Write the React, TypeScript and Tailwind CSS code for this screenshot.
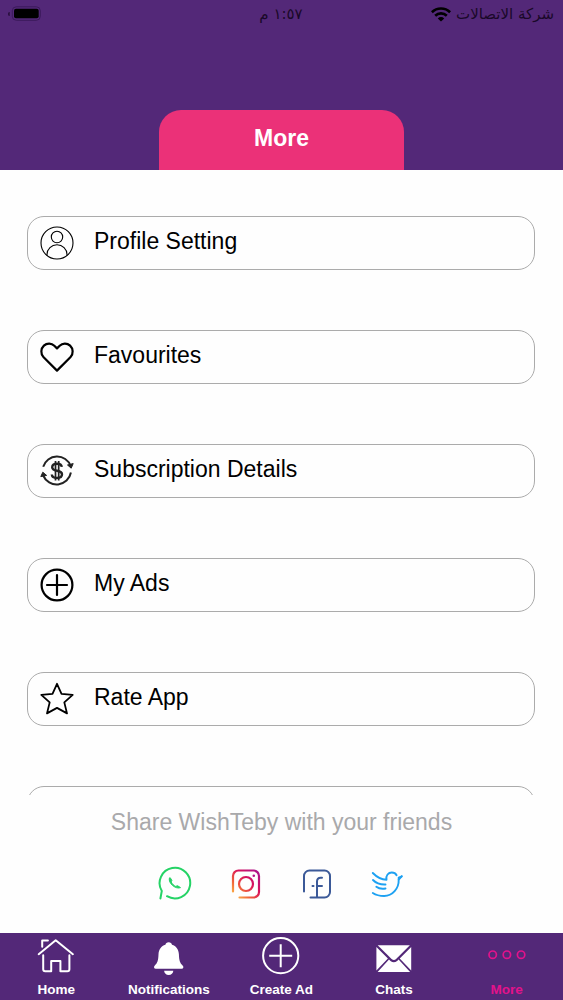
import type { ReactNode } from "react";

type MenuItemProps = {
	label?: string;
	icon?: ReactNode;
};

type NavItemProps = {
	label: string;
	icon: ReactNode;
	active?: boolean;
};

const menuItems: MenuItemProps[] = [
	{
		label: "Profile Setting",
		icon: (
			<g strokeWidth="1.1">
				<circle cx="17" cy="17" r="16" />
				<circle cx="17" cy="11" r="5.7" />
				<path d="M7 29.4v-1a10 9.7 0 0 1 20 0v1" />
			</g>
		),
	},
	{
		label: "Favourites",
		icon: (
			<path
				d="M17 30.600 3.400 17C.5 14 .7 8.600 3.900 5.600c3.100-2.900 7.700-2.600 10.400.1L17 8.400l2.700-2.700c2.700-2.700 7.300-3 10.400-.1 3.200 3 3.400 8.400.5 11.400z"
				strokeWidth="2.200"
			/>
		),
	},
	{
		label: "Subscription Details",
		icon: (
			<g stroke="#222">
				<path d="M3.200 12.800a14.500 14.500 0 0 1 27.500-.8M30.900 18.500a14.500 14.500 0 0 1-27.700 3" strokeWidth="2" />
				<path d="m27.500 11 3.700 3.200 2-4.600zM.8 22.600l2-4.400 3.800 3.200z" fill="#222" strokeWidth="1" />
				<path
					d="M21.800 12.900c-.3-2.200-2-3.200-4.800-3.200s-4.800 1.200-4.800 3.500c0 5 9.800 2.200 9.800 7.100 0 2.400-2 3.700-5 3.700s-5-1.200-5.200-3.500"
					strokeWidth="2.400"
				/>
				<path d="M15.500 7v19.600M18.700 7v19.600" strokeWidth="1.700" />
			</g>
		),
	},
	{
		label: "My Ads",
		icon: (
			<g strokeWidth="2.200" strokeLinecap="round">
				<circle cx="17" cy="17" r="15.400" />
				<path d="M17 7v20M7 17h20" />
			</g>
		),
	},
	{
		label: "Rate App",
		icon: (
			<path
				d="m17 1.800 4.500 10 11.200 1-8.400 7.600 2.700 11L17 25.900 7 31.400l2.700-11-8.400-7.600 11.200-1z"
				strokeWidth="1.800"
			/>
		),
	},
	// next row, only its top edge shows above the share section
	{},
];

const navItems: NavItemProps[] = [
	{
		label: "Home",
		icon: (
			<g fill="none" stroke="currentColor" strokeWidth="2" strokeLinecap="round" strokeLinejoin="round">
				<path d="M3 18.500 20 4.500l17.200 14M6.500 11V4.700h5.700" />
				<path d="M7.500 19.500v14q0 2 2 2h6V25.200h9.200v10.300h7q2 0 2-2v-14" />
			</g>
		),
	},
	{
		label: "Notifications",
		icon: (
			<g fill="currentColor">
				<path d="M20 6.500c1.900 0 3 1 3.300 2.500 4.200 1.300 6.700 4.800 6.900 9.500.2 6.400 1.200 8.900 3.700 11.200 1.400 1.300.8 3.300-1 3.300H7.100c-1.800 0-2.400-2-1-3.300 2.500-2.300 3.500-4.800 3.700-11.200.2-4.700 2.700-8.200 6.900-9.500.3-1.500 1.400-2.500 3.300-2.500z" />
				<path d="M15.400 35h9.200c-.2 2.700-2 4.200-4.600 4.200s-4.400-1.500-4.600-4.200z" />
			</g>
		),
	},
	{
		label: "Create Ad",
		icon: (
			<g fill="none" stroke="currentColor" strokeWidth="2">
				<circle cx="20" cy="20" r="17.600" />
				<path d="M20 8.500v23M8.500 20h23" />
			</g>
		),
	},
	{
		label: "Chats",
		icon: (
			<g fill="currentColor">
				<path d="M4 9.500h32.200L22.400 23.200q-2.200 2-4.500 0z" />
				<path d="m2.700 11.300 11.500 11.400L2.700 34.800zM37.500 11.300v23.500L26 22.700z" />
				<path d="m15.300 23.800 1.500 1.400q3.300 2.700 6.600 0l1.500-1.400 11.500 12.400H3.900z" />
			</g>
		),
	},
	{
		label: "More",
		active: true,
		icon: (
			<g fill="none" stroke="currentColor" strokeWidth="1.700">
				<circle cx="6" cy="19" r="3.700" />
				<circle cx="20.200" cy="19" r="3.700" />
				<circle cx="34.400" cy="19" r="3.700" />
			</g>
		),
	},
];

function StatusBar() {
	return (
		<div dir="rtl" className="grid h-7 grid-cols-3 items-center pl-2 pr-[9px] text-[#1a0829]">
			<div className="flex items-center gap-[5px]">
				<span className="whitespace-nowrap font-['DejaVu_Sans',sans-serif] text-[15px] leading-7">شركة الاتصالات</span>
				<svg className="h-[15px] w-5 shrink-0 text-black" viewBox="0 0 20 15" fill="none" stroke="currentColor">
					<path d="M.9 5.200a13 13 0 0 1 18.200 0M4.200 8.700a8.300 8.300 0 0 1 11.600 0" strokeWidth="2.600" />
					<path d="M6.800 11.400a4.600 4.600 0 0 1 6.400 0L10 14.600z" fill="currentColor" stroke="none" />
				</svg>
			</div>
			<span className="text-center font-['DejaVu_Sans',sans-serif] text-[15px] leading-7">١:٥٧ م</span>
			<svg dir="ltr" className="h-4 w-[33px] justify-self-end" viewBox="0 0 33 16">
				<path d="M1.800 6v4a2 2 0 0 1 0-4z" fill="#2c1142" />
				<rect x="4.300" y=".8" width="28" height="13.500" rx="4" fill="none" stroke="#3b195b" />
				<rect x="6" y="2.800" width="24.700" height="9.500" rx="2" fill="#000" />
			</svg>
		</div>
	);
}

function Header() {
	return (
		<header className="flex h-[170px] shrink-0 flex-col justify-between bg-[#532878]">
			<StatusBar />
			<h1 className="mx-auto h-[60px] w-[245px] rounded-t-[22px] bg-[#eb3178] text-center text-[23px] font-bold leading-[56px] text-white">
				More
			</h1>
		</header>
	);
}

function MenuItem({ label, icon }: MenuItemProps) {
	return (
		<button className="flex h-[54px] w-full shrink-0 items-center gap-5 rounded-[17px] border border-[#ababab] pl-3 text-left">
			<svg className="size-[34px] shrink-0" viewBox="0 0 34 34" fill="none" stroke="#000" strokeLinejoin="round">
				{icon}
			</svg>
			{label && <span className="pb-1 text-[23px] leading-7 text-black">{label}</span>}
		</button>
	);
}

function ShareSection() {
	return (
		<section className="flex flex-1 flex-col items-center pt-[13px]">
			<p className="text-[23px] leading-7 text-[#a9a9ab]">Share WishTeby with your friends</p>
			<div className="mt-[30px] flex gap-[34.500px]">
				{/* whatsapp */}
				<svg className="size-9" viewBox="0 0 36 36" fill="none" stroke="#25d366" strokeWidth="2" strokeLinecap="round">
					<path d="M2.400 32.500 3.800 25A15.300 15.300 0 1 1 9 30.200" />
					<path
						d="M11.300 12.300c-.6 2.300.9 5.100 3.300 7.200 2.500 2.200 5.800 3.100 7.900 2.100l-3-1.900-1.800.7c-2.100-1-3.700-2.600-4.500-4.500l.7-1.500-1.500-2.400z"
						fill="#25d366"
						strokeWidth="1"
						strokeLinejoin="round"
					/>
				</svg>
				{/* instagram */}
				<svg className="size-9" viewBox="0 0 36 36" fill="none" stroke="url(#insta)" strokeWidth="2.200" strokeLinecap="round">
					<defs>
						<linearGradient id="insta" gradientUnits="userSpaceOnUse" x1="5" y1="31" x2="31" y2="5">
							<stop offset="0" stopColor="#ffc247" />
							<stop offset="0.300" stopColor="#f0623a" />
							<stop offset="0.600" stopColor="#d9125a" />
							<stop offset="1" stopColor="#a8128f" />
						</linearGradient>
					</defs>
					<path d="M5 25.500V10a5.500 5.500 0 0 1 5.500-5.500h15A5.500 5.500 0 0 1 31 10v16a5.500 5.500 0 0 1-5.500 5.500H11.500" />
					<circle cx="18" cy="18" r="7" />
					<circle cx="25.800" cy="9.700" r="1.300" fill="#b5128a" stroke="none" />
				</svg>
				{/* facebook */}
				<svg className="size-9" viewBox="0 0 36 36" fill="none" stroke="#3b5998" strokeWidth="2" strokeLinecap="round">
					<path d="M5 25.500V10a5.500 5.500 0 0 1 5.500-5.500h15A5.500 5.500 0 0 1 31 10v16a5.500 5.500 0 0 1-5.500 5.500H11.500" />
					<path d="M18 31V15.500q0-3.700 3.700-3.700h1.300M18 20h5M13.500 20h1" />
				</svg>
				{/* twitter */}
				<svg
					className="size-9"
					viewBox="0 0 36 36"
					fill="none"
					stroke="#1da1f2"
					strokeWidth="1.900"
					strokeLinecap="round"
					strokeLinejoin="round"
				>
					<path d="M3.800 7c3.500 3.600 8.200 6.600 13.700 6.700-.9-4.300 1.900-7.200 5.300-7.200 2.300 0 4 1.200 4.800 2.700M32.700 10.300l-3 3.300c.3 9-6.300 16.400-14.600 16.400-4.300 0-8.200-1-11.300-3" />
					<path d="M29.700 13.600v-2l3-1.300M4 14c3 3.200 7.300 4.700 12.500 4.500M7.300 20.800c2.700 2 5.800 2.400 9.200 1.700" />
				</svg>
			</div>
		</section>
	);
}

function NavItem({ label, icon, active }: NavItemProps) {
	return (
		<button className={`flex flex-col items-center pt-[3px] ${active ? "text-[#e3128b]" : "text-white"}`}>
			<svg className="size-10" viewBox="0.3 0.3 40 40">
				{icon}
			</svg>
			<span className="mt-[5px] whitespace-nowrap text-[13.500px] font-bold leading-[18px]">{label}</span>
		</button>
	);
}

export default function App() {
	return (
		<div className="flex h-[1000px] w-[563px] flex-col overflow-hidden bg-[#fefefe] font-['Liberation_Sans',Arial,sans-serif]">
			<Header />
			<main className="flex h-[625px] shrink-0 flex-col gap-[60px] overflow-hidden pl-[27px] pr-7 pt-[46px]">
				{menuItems.map((item, i) => (
					<MenuItem key={i} {...item} />
				))}
			</main>
			<ShareSection />
			<nav className="grid h-[67px] shrink-0 grid-cols-5 bg-[#532878]">
				{navItems.map((item) => (
					<NavItem key={item.label} {...item} />
				))}
			</nav>
		</div>
	);
}
